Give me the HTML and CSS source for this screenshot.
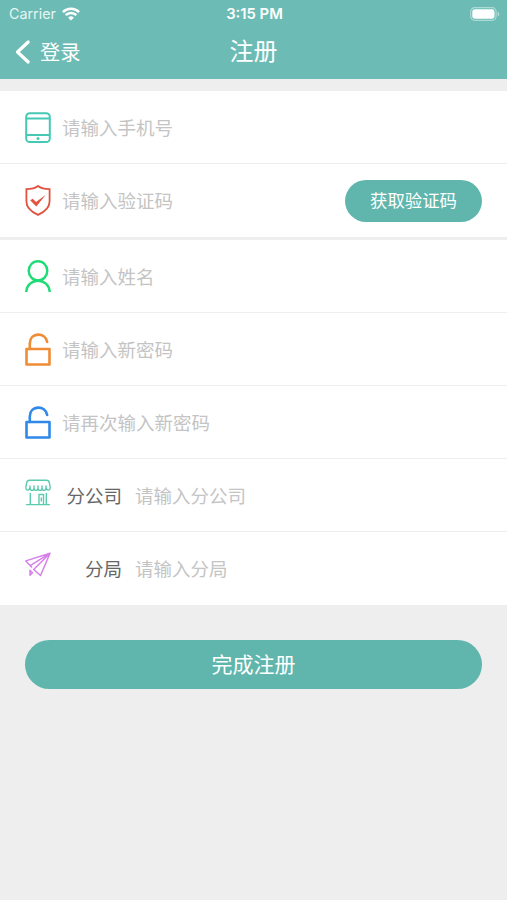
FILE: index.html
```html
<!DOCTYPE html>
<html lang="zh-CN">
<head>
<meta charset="utf-8">
<title>注册</title>
<link rel="stylesheet" href="styles.css">
</head>
<body>
<header class="header">
  <div class="status">
    <div class="carrier"><span>Carrier</span>
      <svg width="18" height="14" viewBox="0 0 18 14" fill="none" stroke="#fff" stroke-width="2.5"><path d="M.9 5.1a11.5 11.5 0 0 1 16.2 0M3.7 8.2a7.5 7.5 0 0 1 10.6 0"/><path d="M9 13.6 6.1 10.7a4.1 4.1 0 0 1 5.8 0z" fill="#fff" stroke="none"/></svg>
    </div>
    <div class="time">3:15 PM</div>
    <div class="battery"><svg width="30" height="14" viewBox="0 0 30 14"><rect x=".7" y=".7" width="25.4" height="12.6" rx="4" fill="none" stroke="#fff" stroke-opacity=".45" stroke-width="1.2"/><rect x="2.3" y="2.3" width="22.2" height="9.4" rx="2.4" fill="#fff"/><path d="M27.7 4.7c2 .8 2 3.8 0 4.6z" fill="#fff" fill-opacity=".5"/></svg></div>
  </div>
  <nav class="nav">
    <a class="back"><svg width="16" height="26" viewBox="0 0 16 26" fill="none" stroke="#fff" stroke-width="3.2" stroke-linecap="round" stroke-linejoin="round"><path d="M13.2 3 2.5 13l10.7 10"/></svg><span>登录</span></a>
    <h1 class="title">注册</h1>
  </nav>
</header>
<main>
  <section class="group">
    <div class="row">
      <svg class="icon" viewBox="0 0 26 34" fill="none" stroke="#45c9b3" stroke-width="2"><rect x="1.2" y="2.2" width="23.6" height="28.8" rx="3.6"/><path d="M1.2 7.5h23.6M1.2 24h23.6"/><circle cx="13" cy="27.600" r="1.5" fill="#45c9b3" stroke="none"/></svg>
      <span class="hint">请输入手机号</span>
    </div>
    <div class="row">
      <svg class="icon" viewBox="0 0 26 34" fill="none" stroke="#e4523f" stroke-width="1.8"><path d="M13 2C10 4.300 5.500 5.100 1.400 5.200V17.300c0 7 5.200 10.800 11.600 13.600C19.400 28.100 24.600 24.300 24.600 17.300V5.200C20.500 5.100 16 4.300 13 2z"/><path d="M5.200 16.200 7.800 14.800 11 18 20.800 10.800 11.300 22.400z" fill="#e4523f" stroke="none"/></svg>
      <span class="hint">请输入验证码</span>
      <button class="code">获取验证码</button>
    </div>
  </section>
  <section class="group">
    <div class="row">
      <svg class="icon" viewBox="0 0 26 34" fill="none" stroke="#1ddb75" stroke-width="2.4"><ellipse cx="13" cy="10.800" rx="9.300" ry="9.600"/><path d="M1.200 32C1.800 25 7 20.700 13 20.700s11.200 4.300 11.800 11.300"/></svg>
      <span class="hint">请输入姓名</span>
    </div>
    <div class="row">
      <svg class="icon orange" viewBox="0 0 26 34" fill="none" stroke="currentColor" stroke-width="2.600" stroke-linecap="round" stroke-linejoin="round"><rect x="1.500" y="16" width="23" height="15.500"/><path d="M4.800 16V10.500C4.800-.8 20.500-1.300 22.200 9"/></svg>
      <span class="hint">请输入新密码</span>
    </div>
    <div class="row">
      <svg class="icon blue" viewBox="0 0 26 34" fill="none" stroke="currentColor" stroke-width="2.600" stroke-linecap="round" stroke-linejoin="round"><rect x="1.500" y="16" width="23" height="15.500"/><path d="M4.800 16V10.500C4.800-.8 20.500-1.300 22.200 9"/></svg>
      <span class="hint">请再次输入新密码</span>
    </div>
    <div class="row">
      <svg class="icon" viewBox="0 0 26 34" fill="none" stroke="#5bcbb0" stroke-width="1.400" stroke-linecap="round"><path d="M4.500 1.200h17c1.800 0 2.600 1 2.900 2.700l.7 4c.4 4.800-3.600 3.600-4.100.8-.2 3.600-4 3.600-4 0 0 3.600-4 3.600-4 0 0 3.600-4 3.600-4 0 0 3.600-3.800 3.600-4 0C4.500 11.500.5 12.700.9 7.900l.7-4C1.900 2.200 2.700 1.200 4.500 1.200z"/><path d="M5 7v1.500M9 7v1.500M13 7v1.500M17 7v1.500M21 7v1.500M5.300 14.500v11M21.300 14.500v11M1.500 25.600h23M14 25v-9.500h4.500V25M16.300 19v3"/></svg>
      <span class="label">分公司</span><span class="hint">请输入分公司</span>
    </div>
    <div class="row">
      <svg class="icon" viewBox="0 0 26 34" fill="none" stroke="#d681ea" stroke-width="1.500" stroke-linejoin="round"><path d="M25 1.200.8 8.900 5.300 13.700 25 1.200 8.700 17.500 15.500 23.500z"/><path d="M5.300 13.700 7 15.500M5 18.300v5l2.500-2.500z"/></svg>
      <span class="label">分局</span><span class="hint">请输入分局</span>
    </div>
  </section>
  <button class="submit">完成注册</button>
</main>
</body>
</html>
```

FILE: styles.css
```css
* {
  box-sizing: border-box;
}

body {
  margin: 0;
  min-height: 900px;
  background: #eeeeee;
  font-family: "Liberation Sans", "Noto Sans CJK SC", sans-serif;
}

.header {
  height: 79px;
  background: #6cbcb5;
  color: #fff;
}

.status {
  height: 27px;
  display: grid;
  grid-template-columns: 1fr auto 1fr;
  align-items: center;
  padding: 0 7px 0 9px;
  font-family: Inter, sans-serif;
}

.carrier {
  display: flex;
  align-items: center;
  gap: 6px;
  font-size: 14.3px;
  color: #e6f5f3;
}

.time {
  font-size: 14.8px;
  font-weight: 600;
}

.battery {
  display: flex;
  justify-content: flex-end;
}

.nav {
  height: 49px;
  display: grid;
  grid-template-columns: 1fr auto 1fr;
  align-items: center;
  padding: 0 15px;
}

.back {
  display: flex;
  align-items: center;
  gap: 9px;
  font-size: 20.3px;
  line-height: 26px;
}

.back span {
  padding-top: 2px;
}

.title {
  margin: 0;
  padding-top: 1px;
  font-size: 24px;
  line-height: 30px;
  font-weight: 400;
}

.group {
  background: #fff;
  margin-top: 12px;
}

.group + .group {
  margin-top: 3px;
}

.row {
  height: 73px;
  display: flex;
  align-items: center;
  padding: 2px 25px 0;
  font-size: 18.5px;
  line-height: 28px;
  border-bottom: 1px solid #eeeeee;
}

.row:last-child {
  border-bottom-color: transparent;
}

.icon {
  width: 26px;
  height: 34px;
  flex: none;
  margin-right: 11px;
}

.orange {
  color: #f08c35;
}

.blue {
  color: #3089e8;
}

.hint {
  padding-top: 2px;
  color: #c4c4c4;
}

.label {
  width: 60px;
  padding-top: 2px;
  margin-right: 13px;
  text-align: right;
  color: #666;
}

button {
  border: 0;
  padding: 0 0 3px;
  background: #60b6ac;
  color: #fff;
  font-family: inherit;
}

.code {
  width: 137px;
  height: 42px;
  margin-left: auto;
  border-radius: 21px;
  font-size: 17.4px;
}

.submit {
  display: block;
  width: 457px;
  height: 49px;
  margin: 35px auto 0;
  border-radius: 24.5px;
  font-size: 21px;
}
```
